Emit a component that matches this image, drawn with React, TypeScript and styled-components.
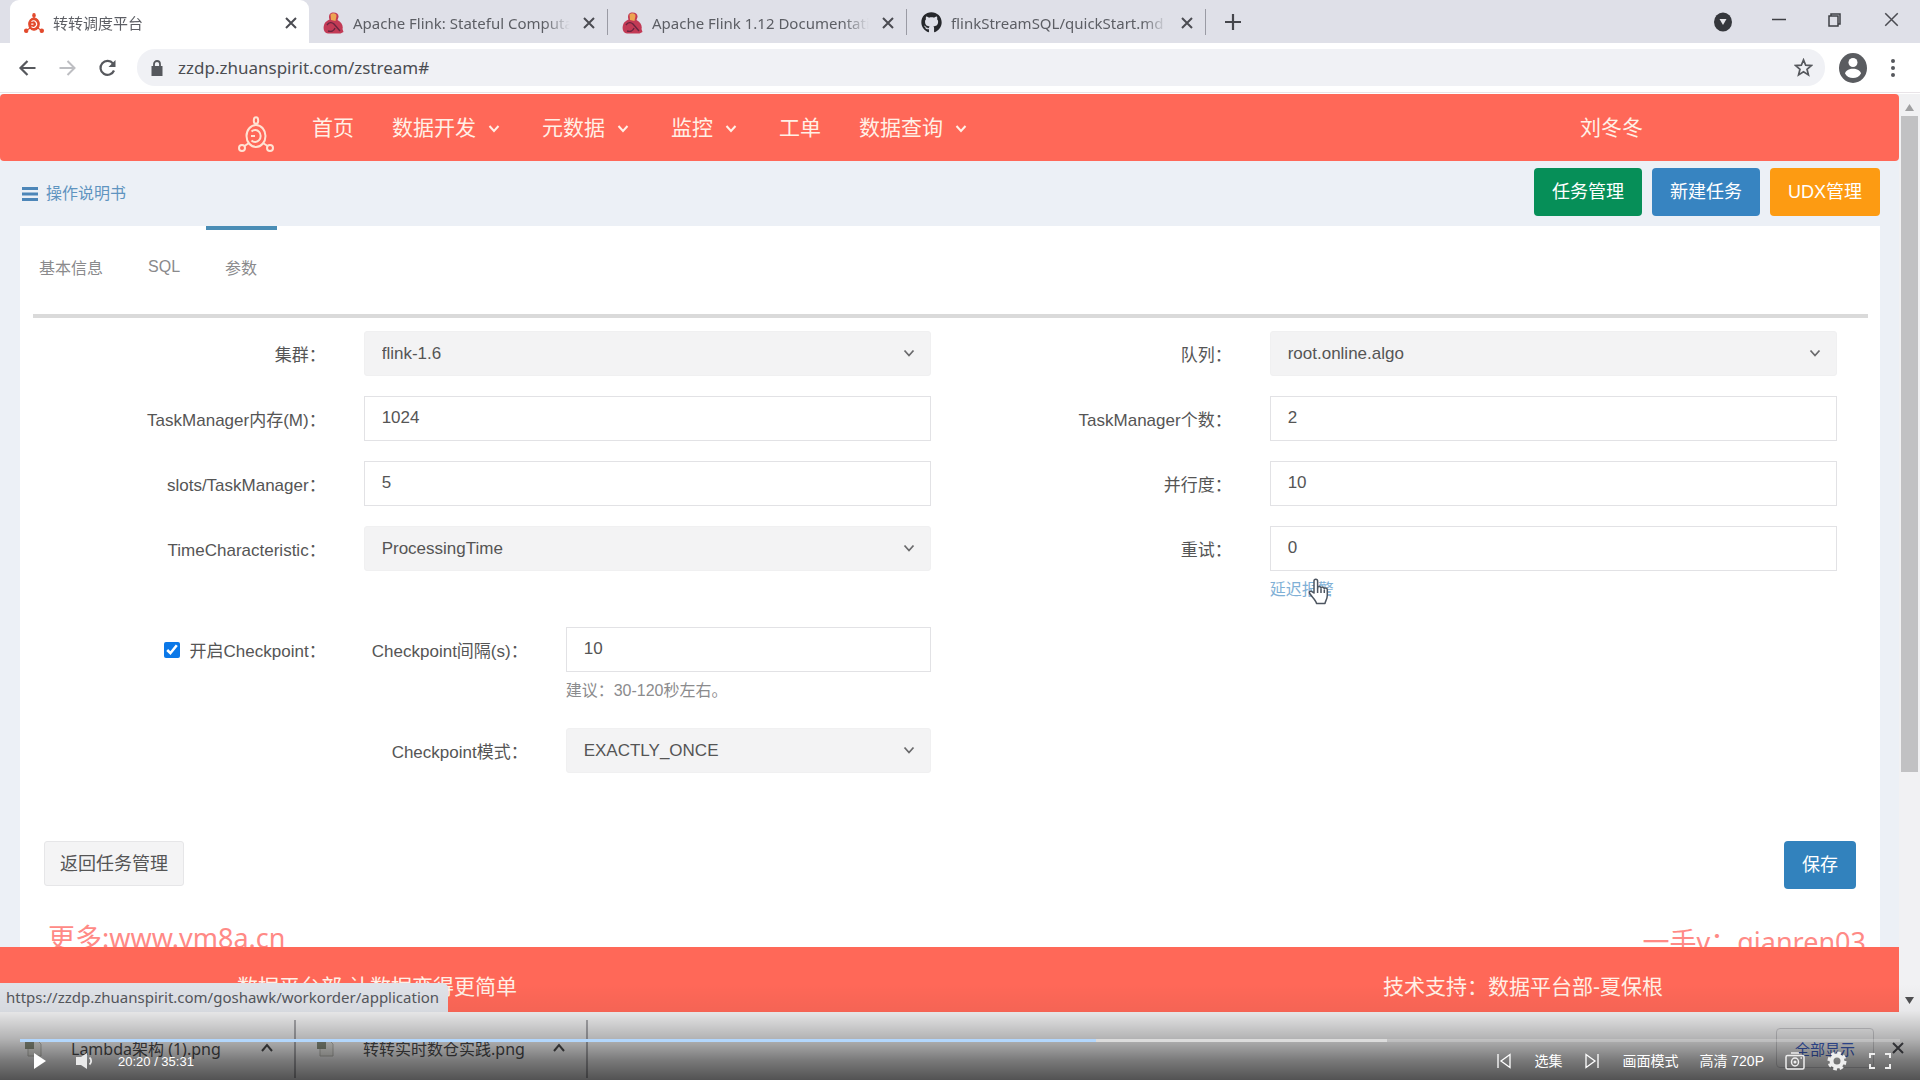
import React from "react";
import styled, { createGlobalStyle, css } from "styled-components";
import { FaGithub } from "react-icons/fa";

const ui = `"Liberation Sans", "Noto Sans CJK SC", sans-serif`;
const chromeFont = `"Noto Sans", "Noto Sans CJK SC", sans-serif`;

const Global = createGlobalStyle`
  *, *::before, *::after { box-sizing: border-box; }
  body { margin: 0; font-family: ${ui}; color: #555; background: #fff; }
  button, input, select { font-family: inherit; margin: 0; }
  button { cursor: pointer; }
  svg { display: block; flex: none; }
`;

const Screen = styled.div`
  position: relative;
  display: flex;
  flex-direction: column;
  height: 100vh;
  overflow: hidden;
`;

/* ---------- browser chrome ---------- */

const TabStrip = styled.div`
  display: flex;
  flex: none;
  height: 43px;
  padding-left: 10px;
  background: #dfe0e8;
  font-family: ${chromeFont};
`;

const BrowserTab = styled.div<{ $active?: boolean }>`
  display: flex;
  align-items: center;
  gap: 9px;
  width: 298px;
  padding: 2px 12px 0 14px;
  ${(p) =>
    p.$active &&
    css`
      width: 299px;
      background: #fff;
      border-radius: 9px 9px 0 0;
    `}
`;

const TabTitle = styled.span`
  flex: 1;
  min-width: 0;
  margin-right: 4px;
  overflow: hidden;
  white-space: nowrap;
  font-size: 15px;
  line-height: 24px;
  color: #5c5e64;
  mask-image: linear-gradient(to right, #000 88%, transparent);
`;

const TabDivider = styled.div`
  width: 1px;
  height: 26px;
  margin-top: 9px;
  background: #9a9ba4;
`;

const IconButton = styled.button`
  display: flex;
  align-items: center;
  justify-content: center;
  flex: none;
  padding: 0;
  border: 0;
  background: none;
  color: inherit;
`;

const NewTab = styled(IconButton)`
  width: 54px;
`;

const WindowButtons = styled.div`
  display: flex;
  align-items: center;
  gap: 39px;
  margin-left: auto;
  padding: 0 21px 4px 0;
  color: #3f4045;
`;

const AddressRow = styled.div`
  display: flex;
  align-items: center;
  flex: none;
  height: 50px;
  padding: 0 21px 0 18px;
  border-bottom: 1px solid #e9e4e8;
  background: #fff;
  color: #5a5c61;
`;

const NavIcons = styled.div`
  display: flex;
  gap: 21px;
  width: 119px;
`;

const AddressPill = styled.div`
  display: flex;
  align-items: center;
  flex: 1;
  height: 37px;
  padding: 0 12px 0 13px;
  border-radius: 18px;
  background: #f0f1f5;
`;

const AddressInput = styled.input`
  flex: 1;
  min-width: 0;
  margin-left: 14px;
  padding: 0;
  border: 0;
  outline: 0;
  background: none;
  font-family: ${chromeFont};
  font-size: 17px;
  color: #4b4d52;
`;

const ProfileIcons = styled.div`
  display: flex;
  align-items: center;
  gap: 20px;
  padding-left: 14px;
`;

/* ---------- page ---------- */

const Viewport = styled.div`
  position: relative;
  display: flex;
  flex: 1;
  min-height: 0;
  padding-top: 1px;
`;

const Page = styled.div`
  display: flex;
  flex: 1;
  flex-direction: column;
  min-width: 0;
  background: #ecf0f6;
`;

const Header = styled.header`
  display: flex;
  align-items: center;
  flex: none;
  height: 67px;
  padding: 0 237px 0 238px;
  border-radius: 4px;
  background: #ff6858;
  color: #fff0e6;
`;

const HomeLink = styled.a`
  padding-top: 12px;
`;

const NavList = styled.nav`
  display: flex;
  flex: 1;
  margin-left: 19px;
`;

const NavLink = styled.a`
  display: flex;
  align-items: center;
  padding: 0 19px;
  font-size: 21px;
  line-height: 32px;
  color: inherit;
  text-decoration: none;
  svg { margin-left: 8px; }
`;

const ActionBar = styled.div`
  display: flex;
  align-items: center;
  justify-content: space-between;
  flex: none;
  height: 65px;
  padding: 0 19px 0 22px;
`;

const ManualLink = styled.a`
  display: flex;
  align-items: center;
  gap: 8px;
  font-size: 16px;
  line-height: 24px;
  color: #5f94c0;
  text-decoration: none;
`;

const ButtonGroup = styled.div`
  display: flex;
  gap: 10px;
  padding-bottom: 4px;
`;

const SolidButton = styled.button<{ $color: string }>`
  height: 48px;
  padding: 0 18px 4px;
  border: 0;
  border-radius: 4px;
  background: ${(p) => p.$color};
  font-size: 18px;
  color: #fff;
`;

const PlainButton = styled.button`
  height: 45px;
  padding: 0 15px 4px;
  border: 1px solid #e6e6e8;
  border-radius: 3px;
  background: #f4f4f5;
  font-size: 18px;
  color: #555;
`;

const Card = styled.main`
  flex: 1;
  min-height: 0;
  margin: 0 19px 0 20px;
  overflow: hidden;
  background: #fff;
`;

const FormTabs = styled.div`
  display: flex;
  gap: 6px;
  height: 88px;
`;

const FormTab = styled.button<{ $active?: boolean }>`
  padding: 0 20px 10px 19px;
  border: 0;
  border-top: 4px solid ${(p) => (p.$active ? "#4a8db5" : "transparent")};
  background: none;
  font-size: 16px;
  color: #8a8a8c;
`;

const Rule = styled.hr`
  height: 4px;
  margin: 0 12px 13px 13px;
  border: 0;
  background: #dadada;
`;

const Form = styled.form`
  padding: 0 24px;
`;

const Columns = styled.div`
  display: grid;
  grid-template-columns: 1fr 1fr;
  row-gap: 20px;
`;

const Field = styled.div<{ $inner?: boolean }>`
  display: grid;
  grid-template-columns: ${(p) => (p.$inner ? "5fr 11fr" : "minmax(0, 1fr) minmax(0, 2fr)")};
  column-gap: 36px;
  align-items: start;
  ${(p) => !p.$inner && css`padding-right: 19px;`}
`;

const Label = styled.label`
  display: flex;
  align-items: center;
  justify-content: flex-end;
  height: 45px;
  padding-right: 2px;
  font-size: 17px;
  white-space: nowrap;
  color: #555;
`;

const control = css`
  display: block;
  width: 100%;
  height: 45px;
  padding: 0 17px 1px;
  border: 1px solid #e2e2e5;
  border-radius: 0;
  outline: 0;
  font-size: 17px;
  color: #555;
`;

const TextBox = styled.input`
  ${control}
  background: #fff;
`;

const SelectWrap = styled.div`
  position: relative;
  svg {
    position: absolute;
    right: 16px;
    top: 18px;
    pointer-events: none;
  }
`;

const SelectBox = styled.select`
  ${control}
  appearance: none;
  border-color: #f0f0f1;
  border-radius: 3px;
  background: #f3f3f4;
`;

const Check = styled.input`
  width: 16px;
  height: 16px;
  margin: 0 10px 0 0;
  accent-color: #0b78e8;
`;

const Help = styled.div`
  margin-top: 7px;
  padding-bottom: 5px;
  font-size: 16px;
  line-height: 24px;
  color: #8b8b8d;
`;

const AlarmLink = styled.a`
  position: relative;
  color: #7fb0d6;
  text-decoration: none;
  svg {
    position: absolute;
    left: 38px;
    top: -3px;
  }
`;

const FormActions = styled.div`
  display: flex;
  align-items: flex-start;
  justify-content: space-between;
  margin-top: 68px;
`;

const Notices = styled.div`
  display: flex;
  align-items: flex-start;
  justify-content: space-between;
  margin: 31px -10px 0 4px;
  font-family: ${chromeFont};
  font-size: 27px;
  line-height: 36px;
  color: #ff8a86;
`;

const SideNotice = styled.span`
  padding-top: 4px;
`;

const Footer = styled.footer`
  display: flex;
  align-items: center;
  justify-content: space-between;
  flex: none;
  height: 65px;
  padding: 10px 236px 0 237px;
  background: #ff6858;
  font-size: 21px;
  color: #fff0e6;
`;

const StatusBubble = styled.div`
  position: absolute;
  left: 0;
  bottom: 0;
  height: 29px;
  padding: 0 9px 0 6px;
  border-top-right-radius: 5px;
  background: #dfe2e8;
  font-family: ${chromeFont};
  font-size: 15px;
  line-height: 28px;
  color: #55575c;
`;

const ScrollBar = styled.div`
  display: flex;
  flex-direction: column;
  align-items: center;
  width: 21px;
  padding: 10px 0 8px;
  background: #f1f1f3;
`;

const Thumb = styled.div`
  width: 17px;
  height: 656px;
  margin: 5px 0 auto;
  background: #c1c1c3;
`;

/* ---------- downloads shelf ---------- */

const Shelf = styled.div`
  display: flex;
  flex: none;
  height: 68px;
  padding: 0 16px 0 4px;
  background: #f1f1f2;
  font-family: ${chromeFont};
  font-size: 16px;
  color: #4a4a4c;
`;

const Download = styled.div`
  display: flex;
  align-items: center;
  width: 292px;
  height: 58px;
  margin-top: 8px;
  padding: 0 17px 2px 20px;
  border-right: 2px solid #a9a9ad;
`;

const FileName = styled.span`
  flex: 1;
  margin-left: 29px;
  white-space: nowrap;
`;

const ShelfEnd = styled.div`
  display: flex;
  align-items: center;
  gap: 18px;
  height: 40px;
  margin: 16px 0 0 auto;
`;

const ShowAll = styled.button`
  height: 40px;
  padding: 0 18px;
  border: 1px solid #c9c9cc;
  border-radius: 4px;
  background: none;
  font-size: 15px;
  color: #3f61c4;
`;

/* ---------- video player overlay ---------- */

const Player = styled.div`
  position: absolute;
  left: 0;
  right: 0;
  bottom: 0;
  display: flex;
  flex-direction: column;
  height: 96px;
  padding-top: 55px;
  background: linear-gradient(
    to bottom,
    rgba(0, 0, 0, 0) 0%,
    rgba(0, 0, 0, 0.04) 28%,
    rgba(0, 0, 0, 0.26) 57%,
    rgba(0, 0, 0, 0.5) 80%,
    rgba(0, 0, 0, 0.66) 100%
  );
  color: #fff;
`;

const Track = styled.div`
  display: flex;
  height: 3px;
  margin: 0 20px;
  background: rgba(255, 255, 255, 0.22);
`;

const Segment = styled.div<{ $color: string }>`
  background: ${(p) => p.$color};
`;

const Controls = styled.div`
  display: flex;
  align-items: center;
  justify-content: space-between;
  height: 38px;
  padding: 0 29px 0 32px;
`;

const ControlSet = styled.div<{ $gap: number }>`
  display: flex;
  align-items: center;
  gap: ${(p) => p.$gap}px;
  font-size: 13px;
`;

const TextControl = styled(IconButton)`
  font-size: 14px;
  line-height: 20px;
`;

/* ---------- drawings ---------- */

const Brand = ({ size, color, solid }: { size: number; color: string; solid?: boolean }) => (
  <svg width={size} height={size} viewBox="0 0 36 36" fill="none" stroke={color} strokeWidth="2">
    <ellipse cx="18" cy="4.5" rx="2.2" ry="3.3" fill={solid ? color : "none"} />
    <ellipse cx="18" cy="20" rx="9.5" ry="11" fill={solid ? color : "none"} />
    <path d="M13.5 15.500a5.500 6 0 1 1 0 9M13 20h4" stroke={solid ? "#fff" : color} />
    <circle cx="4" cy="32" r="3" fill={solid ? color : "none"} />
    <circle cx="32" cy="32" r="3" fill={solid ? color : "none"} />
    <path d="M6.500 30l4.500-3M29.500 30l-4.500-3M18 8v1" />
  </svg>
);

const Flink = () => (
  <svg width="21" height="22" viewBox="0 0 21 22">
    <path d="M8 1c4-1.500 8 .5 7.500 4l-1 3c4 2 6 6 5 9l1 3-3 1.500H5C1.500 21 0 18 .8 14 1.500 10 4 9 6.500 7.500 5.500 5 6 2 8 1z" fill="#c23a55" />
    <path d="M7.500 2.500c2-2 6-1.500 6 1.500L12.500 9 8 8z" fill="#eda552" />
    <path d="M4 13c2-3 5-3 7-1l6 7M5 19c3 1 6 0 7-3" stroke="#6b2540" strokeWidth="1.400" fill="none" />
  </svg>
);

const Cross = ({ size = 12, width = 2, color = "#4b4c52" }) => (
  <svg width={size} height={size} viewBox="0 0 12 12" stroke={color} strokeWidth={width}>
    <path d="M1 1l10 10M11 1L1 11" />
  </svg>
);

const Chevron = ({ size = 20, color = "currentColor", up = false }) => (
  <svg width={size} height={size} viewBox="0 0 20 20" fill="none" stroke={color} strokeWidth="2">
    <path d={up ? "M5 13l5-6 5 6" : "M5.500 8l4.500 5 4.500-5"} />
  </svg>
);

const SelectArrow = () => (
  <svg width="12" height="9" viewBox="0 0 12 9" fill="none" stroke="#6a6a6c" strokeWidth="1.800">
    <path d="M1.500 1.500L6 6.500l4.500-5" />
  </svg>
);

const HandCursor = () => (
  <svg width="21" height="27" viewBox="0 0 21 27" fill="#fff" stroke="#4d5560" strokeWidth="1.500" strokeLinejoin="round">
    <path d="M6 15V3a1.800 1.800 0 0 1 3.600 0v7c0-2 3.400-1.800 3.400.3 0-1.800 3.300-1.500 3.300.6 0-1.500 3-1.300 3 .8v5.500c0 4-2 5.800-2.300 8.300H8.500C8 22 3.500 18.500 1.700 15.500c-1.200-2 1.300-3 2.600-1.700z" />
    <path d="M9.600 10v5M13 11v4M16.300 12v3" />
  </svg>
);

const FileIcon = () => (
  <svg width="18" height="18" viewBox="0 0 18 18">
    <path d="M4 1h9l4 4v12H4z" fill="#e4e4e0" stroke="#b5b5b0" />
    <path d="M1 2h9v8H1z" fill="#8a9080" />
  </svg>
);

const MenuIcon = () => (
  <svg width="16" height="16" viewBox="0 0 16 16" fill="#4d86b8">
    <path d="M0 1h16v3H0zM0 6.500h16v3H0zM0 12h16v3H0z" />
  </svg>
);

const Triangle = ({ down = false }) => (
  <svg width="9" height="7" viewBox="0 0 9 7">
    <path d={down ? "M0 0h9L4.500 7z" : "M0 7h9L4.500 0z"} fill={down ? "#505052" : "#a0a0a2"} />
  </svg>
);

/* ---------- parts ---------- */

const BROWSER_TABS = [
  { title: "Apache Flink: Stateful Computations over Data", icon: <Flink /> },
  { title: "Apache Flink 1.12 Documentation: Apache", icon: <Flink /> },
  { title: "flinkStreamSQL/quickStart.md at master", icon: <FaGithub size={21} color="#26282c" /> },
];

const NAV = [
  { text: "首页" },
  { text: "数据开发", menu: true },
  { text: "元数据", menu: true },
  { text: "监控", menu: true },
  { text: "工单" },
  { text: "数据查询", menu: true },
];

type FieldProps = {
  id: string;
  label: string;
  value: string;
  select?: boolean;
  inner?: boolean;
  help?: React.ReactNode;
};

const FormField = ({ id, label, value, select, inner, help }: FieldProps) => (
  <Field $inner={inner}>
    <Label htmlFor={id}>{label}：</Label>
    <div>
      {select ? (
        <SelectWrap>
          <SelectBox id={id} defaultValue={value}>
            <option value={value}>{value}</option>
          </SelectBox>
          <SelectArrow />
        </SelectWrap>
      ) : (
        <TextBox id={id} type="text" defaultValue={value} />
      )}
      {help && <Help>{help}</Help>}
    </div>
  </Field>
);

const Browser = () => (
  <>
    <TabStrip>
      <BrowserTab $active>
        <Brand size={20} color="#e2492c" solid />
        <TabTitle>转转调度平台</TabTitle>
        <IconButton aria-label="关闭标签"><Cross /></IconButton>
      </BrowserTab>
      {BROWSER_TABS.map((t) => (
        <React.Fragment key={t.title}>
          <BrowserTab>
            {t.icon}
            <TabTitle>{t.title}</TabTitle>
            <IconButton aria-label="关闭标签"><Cross /></IconButton>
          </BrowserTab>
          <TabDivider />
        </React.Fragment>
      ))}
      <NewTab aria-label="新标签">
        <svg width="16" height="16" viewBox="0 0 16 16" stroke="#45464c" strokeWidth="2.200">
          <path d="M8 0v16M0 8h16" />
        </svg>
      </NewTab>
      <WindowButtons>
        <svg width="20" height="24" viewBox="0 0 20 24">
          <ellipse cx="10" cy="14" rx="9" ry="9.500" fill="#35373c" />
          <path d="M6.500 11h7l-3.500 6z" fill="#e6e6ea" />
        </svg>
        <IconButton aria-label="最小化">
          <svg width="14" height="14" viewBox="0 0 14 14" stroke="currentColor" strokeWidth="1.500"><path d="M0 6.500h14" /></svg>
        </IconButton>
        <IconButton aria-label="还原">
          <svg width="20" height="14" viewBox="0 0 20 14" fill="none" stroke="currentColor" strokeWidth="1.500">
            <path d="M4 3h9v10H4zM6 3V1h9v10h-2" />
          </svg>
        </IconButton>
        <IconButton aria-label="关闭"><Cross size={15} width={1.2} /></IconButton>
      </WindowButtons>
    </TabStrip>
    <AddressRow>
      <NavIcons>
        <IconButton aria-label="后退">
          <svg width="19" height="18" viewBox="0 0 19 18" fill="none" stroke="#56585d" strokeWidth="2.200"><path d="M17.500 9H3M9.500 2L2.500 9l7 7" /></svg>
        </IconButton>
        <IconButton aria-label="前进">
          <svg width="19" height="18" viewBox="0 0 19 18" fill="none" stroke="#bdbec2" strokeWidth="2"><path d="M1.500 9H16M9.500 2l7 7-7 7" /></svg>
        </IconButton>
        <IconButton aria-label="刷新">
          <svg width="19" height="18" viewBox="0 0 19 18" fill="none" stroke="#56585d" strokeWidth="2.200">
            <path d="M16 11.500A7 7 0 1 1 15 4.500" /><path d="M17.500 1v7h-7z" fill="#56585d" stroke="none" />
          </svg>
        </IconButton>
      </NavIcons>
      <AddressPill>
        <svg width="14" height="16" viewBox="0 0 14 16">
          <path d="M1.500 6h11v10h-11z" fill="#56585d" /><path d="M4 7V4a3 3 0 0 1 6 0v3" fill="none" stroke="#56585d" strokeWidth="1.800" />
        </svg>
        <AddressInput aria-label="地址" defaultValue="zzdp.zhuanspirit.com/zstream#" />
        <svg width="19" height="19" viewBox="0 0 20 20" fill="none" stroke="#56585d" strokeWidth="1.800">
          <path d="M10 2l2.300 5.600 6 .4-4.600 3.900 1.500 5.900L10 14.600l-5.200 3.200 1.500-5.900L1.700 8l6-.4z" />
        </svg>
      </AddressPill>
      <ProfileIcons>
        <svg width="28" height="30" viewBox="0 0 28 30">
          <ellipse cx="14" cy="15" rx="14" ry="15" fill="#5a5c60" />
          <circle cx="14" cy="9.500" r="4.500" fill="#fff" />
          <path d="M6 20.500c1-6.500 15-6.500 16 0-3 6-13 6-16 0z" fill="#fff" />
        </svg>
        <svg width="12" height="20" viewBox="0 0 12 20" fill="#56585d">
          <circle cx="6" cy="3" r="2" /><circle cx="6" cy="10" r="2" /><circle cx="6" cy="17" r="2" />
        </svg>
      </ProfileIcons>
    </AddressRow>
  </>
);

const TaskForm = () => (
  <Form onSubmit={(e) => e.preventDefault()}>
    <Columns>
      <FormField id="cluster" label="集群" value="flink-1.6" select />
      <FormField id="queue" label="队列" value="root.online.algo" select />
      <FormField id="memory" label="TaskManager内存(M)" value="1024" />
      <FormField id="count" label="TaskManager个数" value="2" />
      <FormField id="slots" label="slots/TaskManager" value="5" />
      <FormField id="parallel" label="并行度" value="10" />
      <FormField id="time" label="TimeCharacteristic" value="ProcessingTime" select />
      <FormField
        id="retry"
        label="重试"
        value="0"
        help={<AlarmLink href="#alarm">延迟报警<HandCursor /></AlarmLink>}
      />
      <Field>
        <Label>
          <Check type="checkbox" defaultChecked />
          开启Checkpoint：
        </Label>
        <FormField id="interval" label="Checkpoint间隔(s)" value="10" inner help="建议：30-120秒左右。" />
      </Field>
      <span />
      <Field>
        <span />
        <FormField id="mode" label="Checkpoint模式" value="EXACTLY_ONCE" select inner />
      </Field>
    </Columns>
    <FormActions>
      <PlainButton type="button">返回任务管理</PlainButton>
      <SolidButton type="submit" $color="#3282bd">保存</SolidButton>
    </FormActions>
    <Notices>
      <span>更多:www.vm8a.cn</span>
      <SideNotice>一手v：qianren03</SideNotice>
    </Notices>
  </Form>
);

const VideoPlayer = () => (
  <Player>
    <Track>
      <Segment $color="#b3d7fd" style={{ width: `${(1220 / 2131) * 100}%` }} />
      <Segment $color="#dcdcdc" style={{ width: `${(330 / 2131) * 100}%` }} />
    </Track>
    <Controls>
      <ControlSet $gap={22}>
        <IconButton aria-label="播放">
          <svg width="18" height="18" viewBox="0 0 18 18" fill="#fff"><path d="M2 1l12 8-12 8z" /></svg>
        </IconButton>
        <IconButton aria-label="音量">
          <svg width="24" height="18" viewBox="0 0 24 18" fill="#e9e9e9">
            <path d="M4 5h5l6-4v16l-6-4H4z" /><path d="M17.500 5.500a4.500 4.500 0 0 1 0 7" fill="none" stroke="#e9e9e9" strokeWidth="1.800" />
          </svg>
        </IconButton>
        <span>20:20 / 35:31</span>
      </ControlSet>
      <ControlSet $gap={21}>
        <IconButton aria-label="上一个">
          <svg width="18" height="16" viewBox="0 0 18 16" fill="none" stroke="#fff" strokeWidth="1.300"><path d="M3 1v14M15 1.500v13L6 8z" /></svg>
        </IconButton>
        <TextControl>选集</TextControl>
        <IconButton aria-label="下一个">
          <svg width="18" height="16" viewBox="0 0 18 16" fill="none" stroke="#fff" strokeWidth="1.300"><path d="M15 1v14M3 1.500v13L12 8z" /></svg>
        </IconButton>
        <TextControl>画面模式</TextControl>
        <TextControl>高清 720P</TextControl>
        <IconButton aria-label="截图">
          <svg width="20" height="18" viewBox="0 0 20 18" fill="none" stroke="#eee" strokeWidth="1.500">
            <rect x="1" y="3.500" width="18" height="13.500" rx="1.500" /><ellipse cx="10" cy="10" rx="3.500" ry="4" /><path d="M6 1h8" /><circle cx="10" cy="10" r=".8" /><path d="M15.500 6h1.500" />
          </svg>
        </IconButton>
        <IconButton aria-label="设置">
          <svg width="22" height="20" viewBox="0 0 20 20" fill="none">
            <circle cx="10" cy="10" r="8" stroke="#eee" strokeWidth="3" strokeDasharray="3.600 2.683" />
            <circle cx="10" cy="10" r="5.500" stroke="#eee" strokeWidth="4" />
          </svg>
        </IconButton>
        <IconButton aria-label="全屏">
          <svg width="22" height="18" viewBox="0 0 22 18" fill="none" stroke="#eee" strokeWidth="2">
            <path d="M1 6V2h5M16 2h5v4M21 12v4h-5M6 16H1v-4" />
          </svg>
        </IconButton>
      </ControlSet>
    </Controls>
  </Player>
);

export default function App() {
  return (
    <Screen>
      <Global />
      <Browser />
      <Viewport>
        <Page>
          <Header>
            <HomeLink href="#" aria-label="首页">
              <Brand size={36} color="#ffe3d3" />
            </HomeLink>
            <NavList>
              {NAV.map((n) => (
                <NavLink key={n.text} href="#">
                  {n.text}
                  {n.menu && <Chevron />}
                </NavLink>
              ))}
            </NavList>
            <NavLink href="#user">刘冬冬</NavLink>
          </Header>
          <ActionBar>
            <ManualLink href="#manual"><MenuIcon />操作说明书</ManualLink>
            <ButtonGroup>
              <SolidButton $color="#068f58">任务管理</SolidButton>
              <SolidButton $color="#3784c1">新建任务</SolidButton>
              <SolidButton $color="#fd9b12">UDX管理</SolidButton>
            </ButtonGroup>
          </ActionBar>
          <Card>
            <FormTabs>
              <FormTab>基本信息</FormTab>
              <FormTab>SQL</FormTab>
              <FormTab $active>参数</FormTab>
            </FormTabs>
            <Rule />
            <TaskForm />
          </Card>
          <Footer>
            <span>数据平台部-让数据变得更简单</span>
            <span>技术支持：数据平台部-夏保根</span>
          </Footer>
        </Page>
        <ScrollBar>
          <Triangle />
          <Thumb />
          <Triangle down />
        </ScrollBar>
        <StatusBubble>https://zzdp.zhuanspirit.com/goshawk/workorder/application</StatusBubble>
      </Viewport>
      <Shelf>
        {["Lambda架构 (1).png", "转转实时数仓实践.png"].map((name) => (
          <Download key={name}>
            <FileIcon />
            <FileName>{name}</FileName>
            <IconButton aria-label="更多"><Chevron up /></IconButton>
          </Download>
        ))}
        <ShelfEnd>
          <ShowAll>全部显示</ShowAll>
          <IconButton aria-label="关闭下载栏"><Cross size={12} /></IconButton>
        </ShelfEnd>
      </Shelf>
      <VideoPlayer />
    </Screen>
  );
}
